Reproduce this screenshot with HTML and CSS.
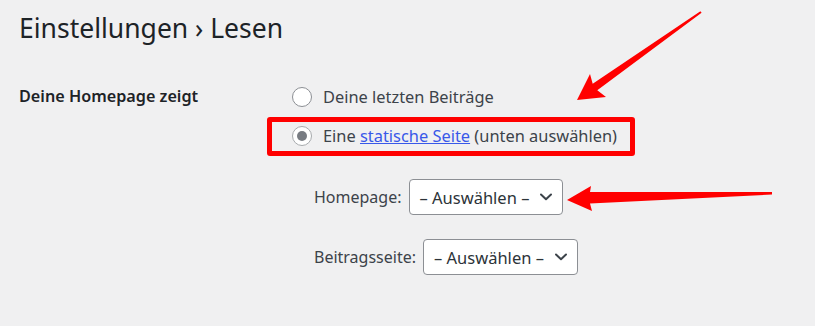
FILE: index.html
```html
<!DOCTYPE html>
<html lang="de">
<head>
<meta charset="utf-8">
<title>Einstellungen › Lesen</title>
<link rel="stylesheet" href="styles.css">
</head>
<body>
<div class="wrap">
  <h1 class="title">Einstellungen › Lesen</h1>
  <div class="form-row">
    <div class="th">Deine Homepage zeigt</div>
    <div class="td">
      <label class="radio-line"><span class="radio"></span>Deine letzten Beiträge</label>
      <label class="radio-line"><span class="radio checked"></span>Eine&nbsp;<a class="link" href="#">statische Seite</a>&nbsp;(unten auswählen)</label>
      <div class="page-selects">
        <div class="select-row">
          <span class="select-label">Homepage:</span>
          <div class="select"><span>– Auswählen –</span><svg class="chev" width="12" height="8" viewBox="0 0 12 8"><path d="M1 1.5 L6 6.2 L11 1.5" fill="none" stroke="#3c434a" stroke-width="2" stroke-linecap="round" stroke-linejoin="round"/></svg></div>
        </div>
        <div class="select-row">
          <span class="select-label">Beitragsseite:</span>
          <div class="select"><span>– Auswählen –</span><svg class="chev" width="12" height="8" viewBox="0 0 12 8"><path d="M1 1.5 L6 6.2 L11 1.5" fill="none" stroke="#3c434a" stroke-width="2" stroke-linecap="round" stroke-linejoin="round"/></svg></div>
        </div>
      </div>
    </div>
  </div>
</div>
<div class="highlight"></div>
<svg class="annotations" width="815" height="326" viewBox="0 0 815 326">
  <polygon fill="#ff0000" points="577,100 590,74 592.7,83.7 700.4,11.2 701.6,12.8 597.3,90.3 606,97"/>
  <polygon fill="#ff0000" points="567,200 591,186 590,192 772,192 772,194.5 590,203.5 592,211"/>
</svg>
</body>
</html>
```
FILE: styles.css
```css
html, body {
  margin: 0;
  padding: 0;
}
body {
  background: #f0f0f1;
  font-family: "Noto Sans", "Open Sans", sans-serif;
  color: #3c434a;
  width: 815px;
  height: 326px;
  overflow: hidden;
  position: relative;
}
.wrap {
  padding-left: 19px;
}
.title {
  margin: 0;
  padding-top: 10px;
  font-size: 26.5px;
  line-height: 36px;
  font-weight: 400;
  color: #1d2327;
}
.form-row {
  display: flex;
  margin-top: 31px;
}
.th {
  width: 273px;
  flex: none;
  font-size: 16.2px;
  font-weight: 600;
  line-height: 39px;
  color: #1d2327;
}
.td {
  display: flex;
  flex-direction: column;
}
.radio-line {
  display: flex;
  align-items: center;
  height: 39px;
  font-size: 16.4px;
  color: #3c434a;
  white-space: nowrap;
}
.radio {
  width: 20px;
  height: 20px;
  box-sizing: border-box;
  border: 1px solid #8c8f94;
  border-radius: 50%;
  background: #fff;
  margin-right: 11px;
  display: flex;
  align-items: center;
  justify-content: center;
  flex: none;
}
.radio.checked {
  border-color: #a7aaad;
}
.radio.checked::before {
  content: "";
  width: 10px;
  height: 10px;
  border-radius: 50%;
  background: #787c82;
}
.link {
  color: #3858e9;
  text-decoration: underline;
}
.page-selects {
  display: flex;
  flex-direction: column;
  gap: 24px;
  margin-top: 24px;
  padding-left: 22px;
}
.select-row {
  display: flex;
  align-items: center;
  gap: 7px;
  font-size: 16px;
  color: #3c434a;
}
.select {
  height: 36px;
  box-sizing: border-box;
  border: 1px solid #8c8f94;
  border-radius: 4px;
  background: #fff;
  padding: 0 10px;
  display: flex;
  align-items: center;
  gap: 11px;
  font-size: 16.5px;
  color: #2c3338;
  white-space: nowrap;
}
.chev {
  display: block;
}
.highlight {
  position: absolute;
  left: 267px;
  top: 117px;
  width: 368px;
  height: 39px;
  box-sizing: border-box;
  border: 5px solid #ff0000;
  border-radius: 3px;
}
.annotations {
  position: absolute;
  left: 0;
  top: 0;
  pointer-events: none;
}
```
